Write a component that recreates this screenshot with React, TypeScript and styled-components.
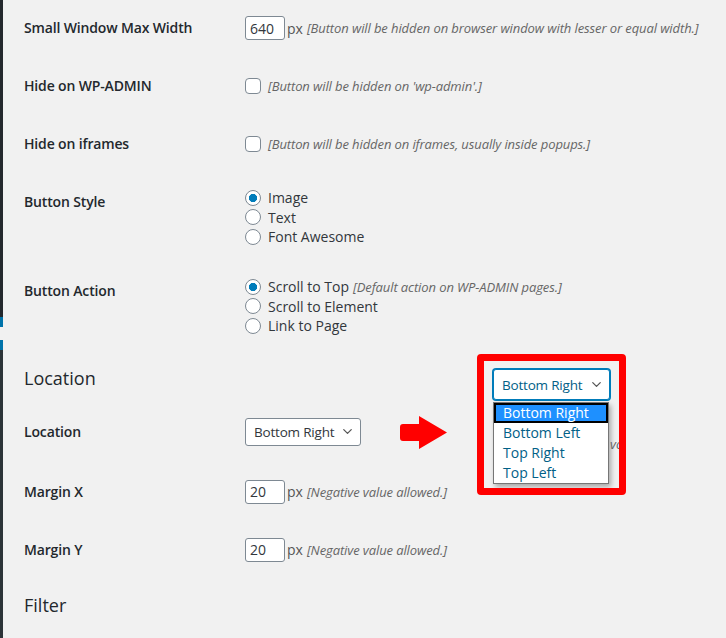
import React from 'react';
import styled, { createGlobalStyle } from 'styled-components';
import { ChevronDown } from 'lucide-react';

const GlobalStyle = createGlobalStyle`
  html, body { margin: 0; padding: 0; background: #f1f1f1; }
  body {
    font-family: "Open Sans", "Noto Sans", sans-serif;
    font-size: 14px;
    color: #23282d;
  }
`;

const Screen = styled.div`
  position: relative;
  display: flex;
  width: 726px;
  height: 638px;
  overflow: hidden;
`;

const AdminEdge = styled.div`
  flex: none;
  width: 3px;
  background: linear-gradient(
    to bottom,
    #23282d 0 317px,
    #0073aa 317px 327px,
    #f1f1f1 327px 340px,
    #0073aa 340px 350px,
    #2c3338 350px 100%
  );
`;

const Main = styled.main`
  flex: 1;
  padding-left: 21px;
`;

const Row = styled.div<{ $bottom?: number }>`
  display: grid;
  grid-template-columns: 221px 1fr;
  align-items: start;
  padding: 16px 0 ${(p) => p.$bottom ?? 18}px;
`;

const Label = styled.div`
  font-weight: 600;
  line-height: 24px;
  letter-spacing: -0.15px;
`;

const Field = styled.div`
  display: flex;
  align-items: center;
  min-height: 24px;
`;

const SectionTitle = styled.h2<{ $top: number; $bottom: number }>`
  margin: ${(p) => p.$top}px 0 ${(p) => p.$bottom}px;
  font-size: 18px;
  font-weight: 400;
  line-height: 24px;
  color: #23282d;
`;

const TextInput = styled.input`
  box-sizing: border-box;
  width: 40px;
  height: 24px;
  margin: 0;
  padding: 0 4px;
  border: 1px solid #7e8993;
  border-radius: 3px;
  background: #fff;
  font: inherit;
  color: #32373c;
`;

const Unit = styled.span`
  margin-left: 2px;
  color: #555;
`;

const Desc = styled.i<{ $gap?: number }>`
  margin-left: ${(p) => p.$gap ?? 4}px;
  font-size: 13px;
  letter-spacing: -0.1px;
  color: #666;
  white-space: nowrap;
`;

const Checkbox = styled.input.attrs({ type: 'checkbox' })`
  appearance: none;
  box-sizing: border-box;
  width: 16px;
  height: 16px;
  margin: 0 7px 0 0;
  border: 1px solid #7e8993;
  border-radius: 4px;
  background: #fff;
`;

const RadioList = styled.div`
  display: flex;
  flex-direction: column;
  margin-top: -2px;
`;

const RadioLine = styled.label`
  display: flex;
  align-items: center;
  height: 19.5px;
  color: #32373c;
  white-space: nowrap;
`;

const Radio = styled.input.attrs({ type: 'radio' })`
  appearance: none;
  box-sizing: border-box;
  flex: none;
  width: 16px;
  height: 16px;
  margin: 0 7px 0 0;
  border: 1px solid #7e8993;
  border-radius: 50%;
  background: #fff;
  &:checked {
    background: radial-gradient(circle, #007cba 0 3.8px, #fff 4.4px);
  }
`;

const SelectBox = styled.div<{ $focused?: boolean }>`
  box-sizing: border-box;
  display: flex;
  align-items: center;
  justify-content: space-between;
  width: ${(p) => (p.$focused ? 117 : 116)}px;
  height: ${(p) => (p.$focused ? 31 : 28)}px;
  margin: ${(p) => (p.$focused ? 0 : '-2px 0')};
  padding: 0 5px 0 8px;
  border: 1px solid ${(p) => (p.$focused ? '#007cba' : '#7e8993')};
  border-radius: 3px;
  box-shadow: ${(p) => (p.$focused ? '0 0 0 1px #007cba' : 'none')};
  background: #fff;
  font-size: 13.5px;
  letter-spacing: -0.2px;
  color: ${(p) => (p.$focused ? '#016087' : '#32373c')};
  white-space: nowrap;
`;

const Chevron = styled(ChevronDown)`
  flex: none;
  color: #555;
`;

/* annotation overlay: the enlarged, opened select */
const Callout = styled.div`
  position: absolute;
  left: 477px;
  top: 354px;
  box-sizing: border-box;
  width: 149px;
  height: 141px;
  padding: 8px 0 0 9px;
  border: 7px solid #ff0000;
  border-radius: 4px;
  background: #f1f1f1;
  overflow: hidden;
`;

const OpenRow = styled.div`
  display: flex;
  align-items: flex-start;
  margin-top: 2px;
`;

const OptionList = styled.ul`
  box-sizing: border-box;
  flex: none;
  width: 116px;
  margin: 0;
  padding: 0;
  list-style: none;
  border: 1px solid #767676;
  background: #fff;
  box-shadow: 2px 3px 5px rgba(0, 0, 0, 0.3);
`;

const Option = styled.li<{ $active?: boolean }>`
  box-sizing: border-box;
  height: 20px;
  line-height: ${(p) => (p.$active ? 16 : 20)}px;
  padding-left: ${(p) => (p.$active ? 7 : 9)}px;
  color: ${(p) => (p.$active ? '#fff' : '#016087')};
  background: ${(p) => (p.$active ? '#1e90ff' : 'transparent')};
  border: ${(p) => (p.$active ? '2px solid #000' : 'none')};
  white-space: nowrap;
`;

const Peek = styled.i`
  margin: 33px 0 0 1px;
  font-size: 13px;
  color: #666;
  white-space: nowrap;
`;

const Arrow = styled.svg`
  position: absolute;
  left: 400px;
  top: 416px;
`;

const App: React.FC = () => {
  const locations = ['Bottom Right', 'Bottom Left', 'Top Right', 'Top Left'];
  return (
    <>
      <GlobalStyle />
      <Screen>
        <AdminEdge />
        <Main>
          <Row>
            <Label>Small Window Max Width</Label>
            <Field>
              <TextInput defaultValue="640" />
              <Unit>px</Unit>
              <Desc>[Button will be hidden on browser window with lesser or equal width.]</Desc>
            </Field>
          </Row>
          <Row>
            <Label>Hide on WP-ADMIN</Label>
            <Field>
              <Checkbox />
              <Desc $gap={0}>[Button will be hidden on 'wp-admin'.]</Desc>
            </Field>
          </Row>
          <Row>
            <Label>Hide on iframes</Label>
            <Field>
              <Checkbox />
              <Desc $gap={0}>[Button will be hidden on iframes, usually inside popups.]</Desc>
            </Field>
          </Row>
          <Row $bottom={16.5}>
            <Label>Button Style</Label>
            <RadioList>
              <RadioLine><Radio name="style" defaultChecked />Image</RadioLine>
              <RadioLine><Radio name="style" />Text</RadioLine>
              <RadioLine><Radio name="style" />Font Awesome</RadioLine>
            </RadioList>
          </Row>
          <Row $bottom={16}>
            <Label>Button Action</Label>
            <RadioList>
              <RadioLine>
                <Radio name="action" defaultChecked />Scroll to Top
                <Desc>[Default action on WP-ADMIN pages.]</Desc>
              </RadioLine>
              <RadioLine><Radio name="action" />Scroll to Element</RadioLine>
              <RadioLine><Radio name="action" />Link to Page</RadioLine>
            </RadioList>
          </Row>

          <SectionTitle $top={14} $bottom={14}>Location</SectionTitle>
          <Row $bottom={20}>
            <Label>Location</Label>
            <Field>
              <SelectBox>
                Bottom Right
                <Chevron size={15} strokeWidth={2} />
              </SelectBox>
            </Field>
          </Row>
          <Row>
            <Label>Margin X</Label>
            <Field>
              <TextInput defaultValue="20" />
              <Unit>px</Unit>
              <Desc>[Negative value allowed.]</Desc>
            </Field>
          </Row>
          <Row>
            <Label>Margin Y</Label>
            <Field>
              <TextInput defaultValue="20" />
              <Unit>px</Unit>
              <Desc>[Negative value allowed.]</Desc>
            </Field>
          </Row>

          <SectionTitle $top={13.5} $bottom={0}>Filter</SectionTitle>
        </Main>

        <Arrow width="48" height="34" viewBox="0 0 48 34">
          <path d="M3 8H19V0L47 16.5L19 33V25H3Q0 25 0 22V11Q0 8 3 8Z" fill="#ff0000" />
        </Arrow>

        <Callout>
          <SelectBox $focused>
            Bottom Right
            <Chevron size={15} strokeWidth={2} />
          </SelectBox>
          <OpenRow>
            <OptionList>
              {locations.map((name, i) => (
                <Option key={name} $active={i === 0}>{name}</Option>
              ))}
            </OptionList>
            <Peek>vo</Peek>
          </OpenRow>
        </Callout>
      </Screen>
    </>
  );
};

export default App;
